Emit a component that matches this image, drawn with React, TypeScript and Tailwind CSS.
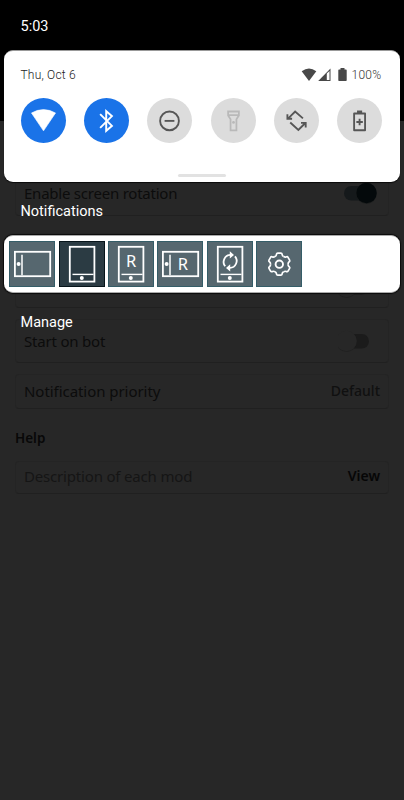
import type { ReactNode } from "react";
import clsx from "clsx";

interface ToggleProps {
  on?: boolean;
}

function Toggle({ on }: ToggleProps) {
  return (
    <svg width="40" height="26" viewBox="0 0 40 26" fill="none">
      <rect x={on ? 6 : 4} y="6" width="27" height="14.5" rx="7.25" fill={on ? "#15191b" : "#1b1b1b"} />
      <circle cx={on ? 28.5 : 8.5} cy="13.6" r="10.3" fill={on ? "#1c1e1e" : "#212121"} />
      <circle cx={on ? 28.5 : 8.5} cy="13" r="10.2" fill={on ? "#04090b" : "#272727"} />
    </svg>
  );
}

interface RowProps {
  className: string;
  label?: string;
  labelClass?: string;
  children?: ReactNode;
}

function Row({ className, label, labelClass, children }: RowProps) {
  return (
    <div className={clsx("flex items-center justify-between rounded-[4px] border border-[#242424] border-b-[#202020] pl-2", className)}>
      <span className={clsx("whitespace-nowrap", labelClass)}>{label}</span>
      {children}
    </div>
  );
}

function SettingsPage() {
  return (
    <div className="flex h-[800px] flex-col bg-[#272727] font-['Noto_Sans',sans-serif] text-[15px] leading-5">
      <div className="h-[121px] shrink-0 bg-black" />
      <div className="flex flex-col px-[15px]">
        <Row className="mt-[50px] h-[45px] pr-[10px] pb-px" label="Enable screen rotation" labelClass="text-[#0c0c0c] tracking-[-0.23px]">
          <Toggle on />
        </Row>
        <Row className="mt-[49px] h-[43px] pr-[10px]">
          <Toggle />
        </Row>
        <Row className="mt-[11px] h-[44px] pr-[10px]" label="Start on bot" labelClass="text-[#0c0c0c] tracking-[-0.2px]">
          <Toggle />
        </Row>
        <Row className="mt-[11px] h-[35px] pr-2 pb-[2px]" label="Notification priority" labelClass="text-[#0c0c0c] tracking-[-0.05px]">
          <span className="text-[14px] font-medium text-[#101010]">Default</span>
        </Row>
        <h2 className="mt-[19px] text-[13.5px] font-semibold text-[#080808]">Help</h2>
        <Row className="mt-[13px] h-[33px] pr-2 pb-[4px]" label="Description of each mod" labelClass="text-[#151515] tracking-[-0.18px]">
          <span className="text-[14px] font-semibold text-[#060606]">View</span>
        </Row>
      </div>
    </div>
  );
}

function StatusIcons() {
  return (
    <div className="flex items-center text-[#484848]">
      <svg width="16" height="14" viewBox="0 0 16 14" fill="currentColor">
        <path d="M.7 3.2Q8-2.2 15.3 3.2L8 13z" />
      </svg>
      <svg className="ml-px" width="13" height="14" viewBox="0 0 13 14">
        <path d="M12.5.6V13H.2z" fill="currentColor" />
        <path d="M8.8 5.4 11.5 3v9H8.8z" fill="#fff" />
      </svg>
      <svg className="ml-[7px]" width="9" height="14" viewBox="0 0 9 14" fill="currentColor">
        <path d="M2.5 0h4v1.5H8q.7 0 .7.7v10.1q0 .7-.7.7H1q-.7 0-.7-.7V2.2q0-.7.7-.7h1.5z" />
      </svg>
      <span className="ml-[4px] text-[12px] leading-4 font-light tracking-[0.3px] text-[#333]">100%</span>
    </div>
  );
}

const quickTiles = [
  {
    name: "wifi",
    color: "bg-[#1a73e8] text-white",
    icon: <path d="M10.7 15.3Q23 8.4 35.3 15.3L23 33.6z" fill="currentColor" stroke="currentColor" strokeWidth=".6" strokeLinejoin="round" />,
  },
  {
    name: "bluetooth",
    color: "bg-[#1a73e8] text-white",
    icon: <path d="m16.5 16.5 12 12-5.8 5V13.5l5.8 5-12 12" stroke="currentColor" strokeWidth="2" />,
  },
  {
    name: "dnd",
    color: "bg-[#dcdcdc] text-[#565656]",
    icon: (
      <g stroke="currentColor" strokeWidth="1.9">
        <circle cx="23" cy="23.4" r="9.6" />
        <path d="M18 23.4h10" />
      </g>
    ),
  },
  {
    name: "flashlight",
    color: "bg-[#dcdcdc] text-[#b9b9b9]",
    icon: (
      <g stroke="currentColor" strokeWidth="1.8">
        <path d="M17.5 13.8h11v4.1l-2.5 3.8v11.5h-6V21.7l-2.5-3.8zM17.5 17.5h11" />
        <circle cx="23" cy="25" r="1.4" fill="currentColor" stroke="none" />
      </g>
    ),
  },
  {
    name: "rotate",
    color: "bg-[#dcdcdc] text-[#565656]",
    icon: (
      <g stroke="currentColor" strokeWidth="1.9">
        <path d="m29.6 20.8-8-7-7 7M13.7 16.5v4.7h4.8" />
        <path d="m16.6 25 8.3 7.6 6.9-6.8M27.6 25.4h4.8v4.7" />
      </g>
    ),
  },
  {
    name: "battery",
    color: "bg-[#dcdcdc] text-[#565656]",
    icon: (
      <g stroke="currentColor" strokeWidth="1.9">
        <path d="M17.5 15.8h11.2v17.2H17.5z" strokeLinejoin="round" />
        <path d="M20.5 14.3h5.2" strokeWidth="3" />
        <path d="M23.1 21.2v6.6M19.8 24.5h6.6" />
      </g>
    ),
  },
];

function QuickSettings() {
  return (
    <section className="mx-1 flex h-[132px] flex-col rounded-[9px] border-t border-[#999] bg-white shadow-[0_1px_1px_#0a0a0a]">
      <div className="flex items-center justify-between pt-4 pr-[18.5px] pl-[16.5px]">
        <span className="text-[12px] leading-4 font-light tracking-[0.2px] text-[#222]">Thu, Oct 6</span>
        <StatusIcons />
      </div>
      <div className="mt-[15px] flex justify-between pr-[18px] pl-[17px]">
        {quickTiles.map((tile) => (
          <div key={tile.name} className={clsx("size-[45px] rounded-full", tile.color)}>
            <svg className="size-full" viewBox="0 0 46 46" fill="none">
              {tile.icon}
            </svg>
          </div>
        ))}
      </div>
      <div className="mt-auto mb-[5px] h-[3px] w-12 self-center rounded-full bg-[#e2e2e2]" />
    </section>
  );
}

const portrait = (
  <>
    <rect x="10.8" y="5.8" width="24.6" height="34.8" />
    <path d="M13.5 33.4h21" strokeWidth="1.4" />
    <circle cx="22.8" cy="36.9" r="2" fill="white" stroke="none" />
  </>
);

const landscape = (
  <>
    <rect x="5.9" y="10.8" width="35.3" height="24.4" />
    <path d="M13 13.7v20.6" strokeWidth="1.5" />
    <circle cx="9.6" cy="23" r="2" fill="white" stroke="none" />
  </>
);

// one tooth of the gear, repeated every 60 degrees
const teeth = [0, 60, 120, 180, 240, 300];

const modes = [
  { name: "landscape", icon: landscape },
  { name: "portrait", icon: portrait, active: true },
  {
    name: "portrait-reverse",
    icon: (
      <>
        {portrait}
        <text x="23.2" y="25.5" textAnchor="middle" fontSize="16.5" fill="white" stroke="none">R</text>
      </>
    ),
  },
  {
    name: "landscape-reverse",
    icon: (
      <>
        {landscape}
        <text x="25.8" y="29.3" textAnchor="middle" fontSize="16.5" fill="white" stroke="none">R</text>
      </>
    ),
  },
  {
    name: "auto",
    icon: (
      <>
        {portrait}
        <path d="M18.2 25.3a7 7 0 0 1 5.1-11.4h1.5M28 15.4a7 7 0 0 1-5.1 11.5h-1.5" />
        <path d="m22.8 10.3 4.2 3.7-4.2 3.6zM23.2 23.2 19 26.9l4.2 3.7z" fill="white" stroke="none" />
      </>
    ),
  },
  {
    name: "settings",
    icon: (
      <g strokeWidth="1.7">
        {teeth.map((angle) => (
          <path
            key={angle}
            d="M-4.4-7.6C-2.7-8.5-3-8.9-2.8-10Q-2.6-11-1.6-11H1.6Q2.6-11 2.8-10C3-8.9 2.7-8.5 4.4-7.6"
            transform={`translate(23.3 23.2) rotate(${angle})`}
          />
        ))}
        <circle cx="23.3" cy="23.2" r="3.7" strokeWidth="1.9" />
      </g>
    ),
  },
];

function ModeBar() {
  return (
    <section className="mx-1 mt-[14px] flex h-[58px] items-center gap-[3.4px] rounded-[9px] border-y border-[#aaa] bg-white pl-[5.3px] shadow-[0_0_1px_1px_#0a0a0a]">
      {modes.map((mode) => (
        <div key={mode.name} className={clsx("size-[46px] border", mode.active ? "border-[#07151b] bg-[#2b3b43]" : "border-[#355d68] bg-[#56676f]")}>
          <svg className="-m-px size-[46px] max-w-none font-['Noto_Sans',sans-serif]" viewBox="0 0 46 46" fill="none" stroke="white" strokeWidth="1.8">
            {mode.icon}
          </svg>
        </div>
      ))}
    </section>
  );
}

export default function App() {
  return (
    <main className="relative h-[800px] w-[404px] overflow-hidden">
      <SettingsPage />
      <div className="absolute inset-0 flex flex-col font-['Roboto',sans-serif] text-[14.5px] leading-[18px] text-white">
        <div className="h-[50px] pt-[18px] pl-[20.5px]">5:03</div>
        <QuickSettings />
        <h2 className="mt-[21px] pl-[20.5px]">Notifications</h2>
        <ModeBar />
        <button className="mt-[21px] self-start pl-[20.5px]">Manage</button>
      </div>
    </main>
  );
}
